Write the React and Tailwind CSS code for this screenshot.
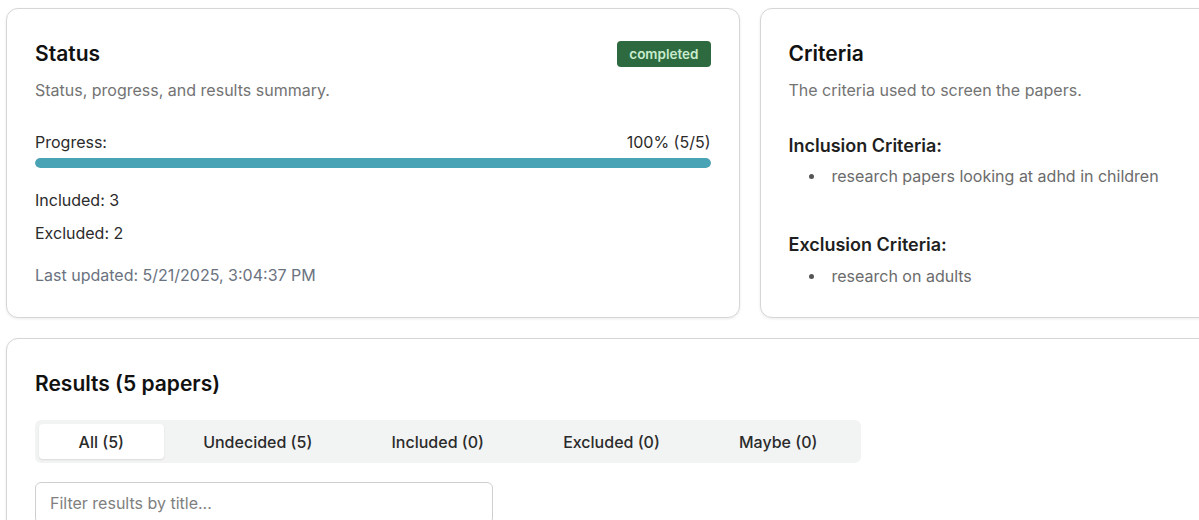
const font = { fontFamily: "Inter, 'Noto Sans', sans-serif" };

const tabs = [
  { label: "All (5)", active: true },
  { label: "Undecided (5)" },
  { label: "Included (0)" },
  { label: "Excluded (0)" },
  { label: "Maybe (0)" },
];

function Card({ className = "", children }) {
  return (
    <div
      className={`rounded-xl border border-[#d6d6d6] bg-white shadow-[0_1px_3px_rgba(0,0,0,0.08)] ${className}`}
    >
      {children}
    </div>
  );
}

function Bullet({ children }) {
  return (
    <li className="flex items-center pl-5 text-[16px] leading-5 text-[#6b6b6b]">
      <span className="mr-[18px] h-[5px] w-[5px] rounded-full bg-[#555]" />
      {children}
    </li>
  );
}

export default function App() {
  return (
    <div className="h-[520px] w-[1199px] overflow-hidden bg-white" style={font}>
      <div className="ml-[6px] mt-[8px] w-[1487px]">
        <div className="grid grid-cols-2 gap-5">
          {/* status summary */}
          <Card className="px-7 pt-[31px] pb-[31px]">
            <div className="flex items-start justify-between">
              <h2 className="text-[21px] font-semibold leading-7 text-[#111]">Status</h2>
              <span className="mt-[1px] rounded-[4px] bg-[#2d6a3f] px-3 py-[4px] text-[13.5px] font-semibold leading-[18px] text-[#c9ecce]">
                completed
              </span>
            </div>
            <p className="mt-3 text-[16px] leading-5 text-[#737373]">
              Status, progress, and results summary.
            </p>
            <div className="mt-8 flex justify-between text-[16px] leading-5 text-[#2b2b2b]">
              <span>Progress:</span>
              <span>100% (5/5)</span>
            </div>
            <div className="mt-[6px] h-[10px] w-full overflow-hidden rounded-full bg-[#e5e7eb]">
              <div className="h-full rounded-full bg-[#48a3b4]" style={{ width: "100%" }} />
            </div>
            <p className="mt-[22px] text-[16px] leading-5 text-[#2b2b2b]">Included: 3</p>
            <p className="mt-[13px] text-[16px] leading-5 text-[#2b2b2b]">Excluded: 2</p>
            <p className="mt-[22px] text-[16px] leading-5 text-[#6b7280]">
              Last updated: 5/21/2025, 3:04:37 PM
            </p>
          </Card>

          {/* screening criteria */}
          <Card className="px-7 pt-[31px] pb-[31px]">
            <h2 className="text-[21px] font-semibold leading-7 text-[#111]">Criteria</h2>
            <p className="mt-3 text-[16px] leading-5 text-[#737373]">
              The criteria used to screen the papers.
            </p>
            <h3 className="mt-[34px] text-[18px] font-semibold leading-6 text-[#1f1f1f]">
              Inclusion Criteria:
            </h3>
            <ul className="mt-2">
              <Bullet>research papers looking at adhd in children</Bullet>
            </ul>
            <h3 className="mt-[47px] text-[18px] font-semibold leading-6 text-[#1f1f1f]">
              Exclusion Criteria:
            </h3>
            <ul className="mt-[9px]">
              <Bullet>research on adults</Bullet>
            </ul>
          </Card>
        </div>

        {/* results list */}
        <Card className="mt-5 h-[260px] px-7 pt-[31px]">
          <h2 className="text-[21px] font-semibold leading-7 text-[#111]">Results (5 papers)</h2>
          <div className="mt-[22px] flex h-[43px] w-[826px] rounded-md bg-[#f2f3f3] p-1">
            {tabs.map((t) => (
              <button
                key={t.label}
                className={`flex-auto rounded-[4px] px-2 text-[16px] font-medium text-[#2b2b2b] ${
                  t.active ? "bg-white shadow-[0_1px_2px_rgba(0,0,0,0.1)]" : ""
                }`}
              >
                {t.label}
              </button>
            ))}
          </div>
          <input
            type="text"
            placeholder="Filter results by title..."
            className="mt-[19px] h-[42px] w-[458px] rounded-md border border-[#cfcfcf] px-[14px] text-[16px] text-[#2b2b2b] placeholder:text-[#808080] focus:outline-none"
          />
        </Card>
      </div>
    </div>
  );
}
